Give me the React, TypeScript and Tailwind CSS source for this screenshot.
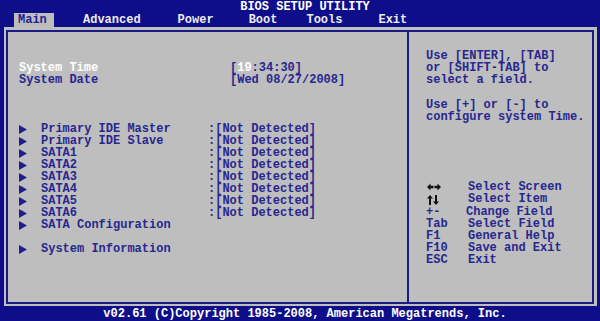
import React from "react";

const items = [
  "Primary IDE Master",
  "Primary IDE Slave",
  "SATA1",
  "SATA2",
  "SATA3",
  "SATA4",
  "SATA5",
  "SATA6",
];

function Arrow() {
  return (
    <svg width="8" height="9" viewBox="0 0 8 9" className="block">
      <path d="M0 0 L8 4.5 L0 9 Z" fill="#1e1e8e" />
    </svg>
  );
}

function LeftRight() {
  return (
    <svg width="14" height="8" viewBox="0 0 14 8" className="block">
      <path d="M0 4 L3.5 0.5 L3.5 2.8 L6.5 2.8 L6.5 5.2 L3.5 5.2 L3.5 7.5 Z" fill="#111" />
      <path d="M14 4 L10.5 0.5 L10.5 2.8 L7.5 2.8 L7.5 5.2 L10.5 5.2 L10.5 7.5 Z" fill="#111" />
    </svg>
  );
}

function UpDown() {
  return (
    <svg width="12" height="10" viewBox="0 0 12 10" className="block">
      <path d="M3 0 L6 3.5 L4 3.5 L4 10 L2 10 L2 3.5 L0 3.5 Z" fill="#111" />
      <path d="M9 10 L12 6.5 L10 6.5 L10 0 L8 0 L8 6.5 L6 6.5 Z" fill="#111" />
    </svg>
  );
}

export default function App() {
  return (
    <div className="w-[600px] h-[321px] bg-[#0e0e8a] font-['Liberation_Mono',monospace] font-bold text-[12px] leading-[12px] flex flex-col overflow-hidden">
      {/* header */}
      <div className="h-[13px] pt-[1px] text-center text-white pl-[10px]">
        BIOS SETUP UTILITY
      </div>
      <div className="h-[14px] flex items-stretch text-[#ececec]">
        <div className="ml-[14px] w-[40px] bg-[#bebebe] text-[#23238e] pl-[4px] pt-[1px]">Main</div>
        <div className="ml-[29px] pt-[1px]">Advanced</div>
        <div className="ml-[37px] pt-[1px]">Power</div>
        <div className="ml-[35px] pt-[1px]">Boot</div>
        <div className="ml-[29px] pt-[1px]">Tools</div>
        <div className="ml-[36px] pt-[1px]">Exit</div>
      </div>

      {/* body */}
      <div className="ml-[4px] w-[593px] h-[279px] bg-[#bebebe] pt-[3px] pl-[2px] pr-[3px] pb-[2px]">
        <div className="h-full border-2 border-[#1a1a84] flex text-[#27278f]">
          {/* left pane */}
          <div className="w-[401px] border-r-2 border-[#1a1a84] pt-[30px] pl-[11px]">
            <div className="flex">
              <div className="w-[211px] text-white">System Time</div>
              <div>
                [<span className="text-white">19</span>:34:30]
              </div>
            </div>
            <div className="flex">
              <div className="w-[211px]">System Date</div>
              <div>[Wed 08/27/2008]</div>
            </div>

            <div className="mt-[37px] flex flex-col">
              {items.map((name) => (
                <div key={name} className="flex items-center h-[12px]">
                  <div className="w-[22px]">
                    <Arrow />
                  </div>
                  <div className="w-[167px]">{name}</div>
                  <div>:[Not Detected]</div>
                </div>
              ))}
              <div className="flex items-center h-[12px]">
                <div className="w-[22px]">
                  <Arrow />
                </div>
                <div>SATA Configuration</div>
              </div>
              <div className="flex items-center h-[12px] mt-[12px]">
                <div className="w-[22px]">
                  <Arrow />
                </div>
                <div>System Information</div>
              </div>
            </div>
          </div>

          {/* right pane */}
          <div className="flex-1 pt-[18px] pl-[17px] leading-[12.2px]">
            <div>Use [ENTER], [TAB]</div>
            <div>or [SHIFT-TAB] to</div>
            <div>select a field.</div>
            <div className="mt-[12px]">Use [+] or [-] to</div>
            <div>configure system Time.</div>

            <div className="mt-[58px] flex flex-col">
              <div className="flex items-center h-[12px]">
                <div className="w-[42px] pl-[1px]">
                  <LeftRight />
                </div>
                <div>Select Screen</div>
              </div>
              <div className="flex items-center h-[13px]">
                <div className="w-[42px] pl-[1px]">
                  <UpDown />
                </div>
                <div>Select Item</div>
              </div>
              <div className="flex h-[12px]">
                <div className="w-[40px]">+-</div>
                <div>Change Field</div>
              </div>
              <div className="flex h-[12px]">
                <div className="w-[42px]">Tab</div>
                <div>Select Field</div>
              </div>
              <div className="flex h-[12px]">
                <div className="w-[42px]">F1</div>
                <div>General Help</div>
              </div>
              <div className="flex h-[12px]">
                <div className="w-[42px]">F10</div>
                <div>Save and Exit</div>
              </div>
              <div className="flex h-[12px]">
                <div className="w-[42px]">ESC</div>
                <div>Exit</div>
              </div>
            </div>
          </div>
        </div>
      </div>

      {/* footer */}
      <div className="h-[15px] pt-[2px] text-center text-white pl-[10px]">
        v02.61 (C)Copyright 1985-2008, American Megatrends, Inc.
      </div>
    </div>
  );
}
